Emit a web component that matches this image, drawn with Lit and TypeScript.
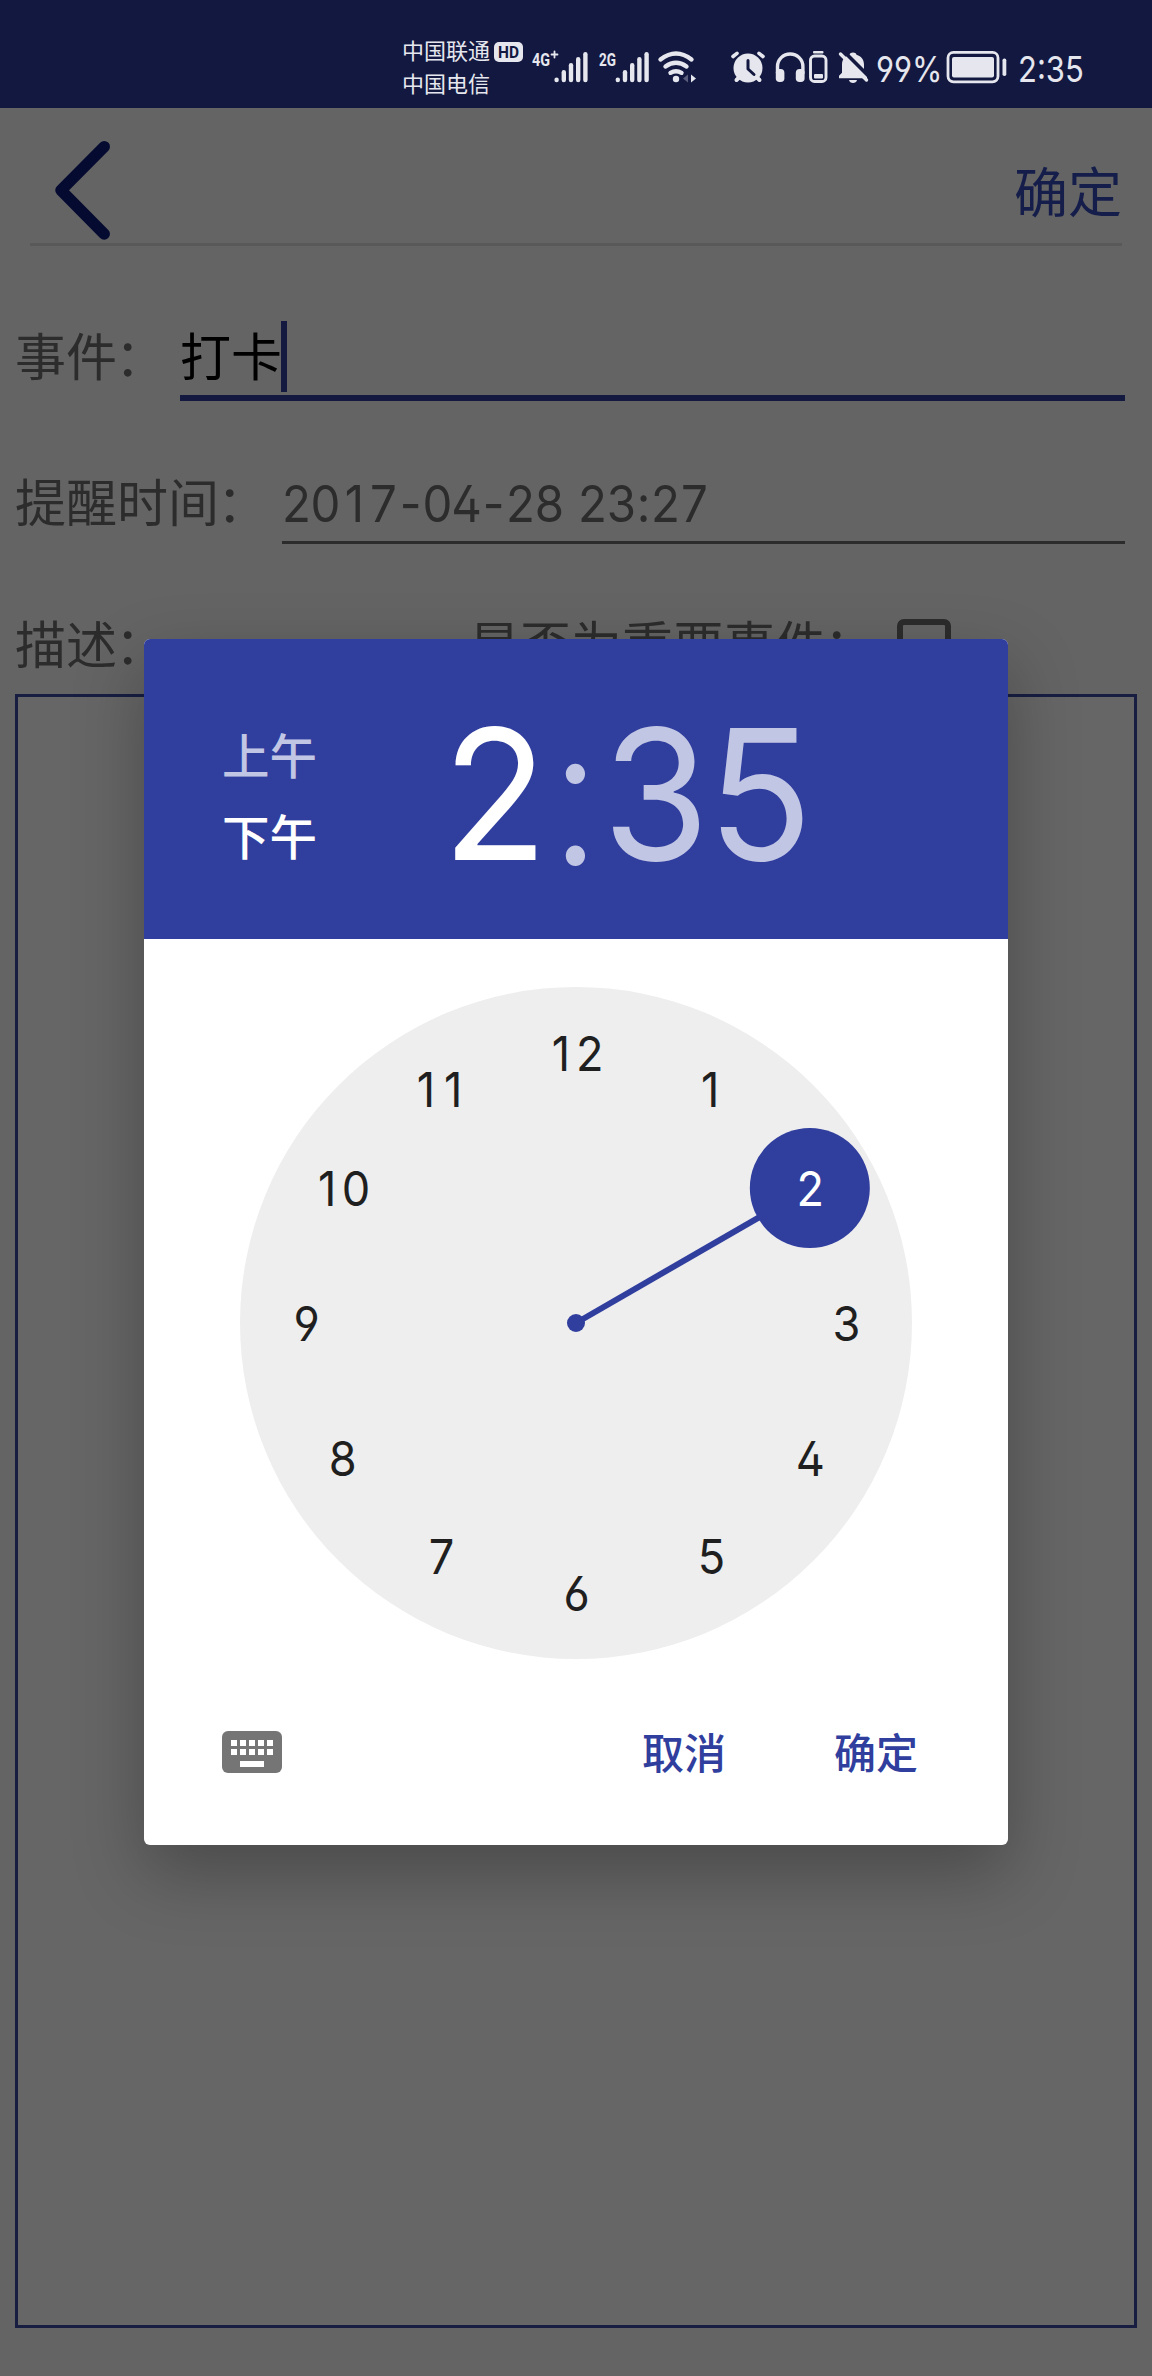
import { LitElement, html, svg, css } from "lit";
import { customElement, property } from "lit/decorators.js";

@customElement("status-bar")
class StatusBar extends LitElement {
  static styles = css`
    :host { display: block; }
    .bar {
      display: flex; height: 108px; box-sizing: border-box; padding-left: 402px;
      background: #131840; color: #e6e7ee;
      font-family: "Noto Sans CJK SC", sans-serif; white-space: nowrap;
    }
    .carriers { width: 88px; padding-top: 33px; font-size: 22px; line-height: 33px; }
    .icons { display: block; flex: none; width: 385px; height: 108px; }
    .icon-text { font-family: Roboto, sans-serif; font-weight: 700; }
    .num {
      font-family: Inter, sans-serif; font-feature-settings: "cv02", "cv03", "cv04";
      font-size: 36px; line-height: 40px; padding-top: 49px;
    }
    .num span { display: inline-block; transform-origin: 0 50%; transform: scaleX(0.86); }
    .pct { width: 69px; padding-left: 1px; }
    .battery { display: block; width: 62px; height: 108px; flex: none; }
    .time { padding-left: 11px; }
  `;

  private bars(x: number) {
    const tops = [77.5, 70, 63, 57, 52];
    return tops.map((t, i) => svg`<rect x=${x + i * 7.2} y=${t} width="4.4" height=${82.3 - t} rx="2.2" fill="#e6e7ee"/>`);
  }

  render() {
    return html`<div class="bar">
      <div class="carriers"><div>中国联通</div><div>中国电信</div></div>
      <svg class="icons" viewBox="490 0 385 108" fill="none" stroke-linecap="round" stroke-linejoin="round">
        <rect x="494" y="42" width="29" height="20" rx="5" fill="#e6e7ee"/>
        <text class="icon-text" x="508.5" y="58" font-size="17" text-anchor="middle" fill="#131840" textLength="21" lengthAdjust="spacingAndGlyphs">HD</text>
        <text class="icon-text" x="532" y="66" font-size="19" fill="#e6e7ee" textLength="18" lengthAdjust="spacingAndGlyphs">4G</text>
        <path d="M551.5 54.5h6M554.5 51.5v6" stroke="#e6e7ee" stroke-width="1.8"/>
        ${this.bars(554.4)}
        <text class="icon-text" x="599" y="66" font-size="19" fill="#e6e7ee" textLength="17" lengthAdjust="spacingAndGlyphs">2G</text>
        ${this.bars(615.6)}
        <path d="M660.5 59.5Q676 47.500 691.500 59.500" stroke="#e6e7ee" stroke-width="4.400"/>
        <path d="M665.500 66.500Q676 59 686.500 66.500" stroke="#e6e7ee" stroke-width="4.400"/>
        <path d="M670.500 72.800Q676 69.500 681.500 72.800" stroke="#e6e7ee" stroke-width="4.400"/>
        <circle cx="676" cy="79" r="3.200" fill="#e6e7ee"/>
        <path d="M688 74.500v8l-5-4z" fill="#5b5e7d"/>
        <path d="M691 74.500v8l5-4z" fill="#e6e7ee"/>
        <circle cx="748" cy="68" r="14.500" fill="#e6e7ee"/>
        <path d="M733 56.500l4-3.200M763 56.500l-4-3.200" stroke="#e6e7ee" stroke-width="3.600"/>
        <path d="M736.500 80l3-3M759.500 80l-3-3" stroke="#e6e7ee" stroke-width="4"/>
        <path d="M748 60.500v8.500l6 5.500" stroke="#131840" stroke-width="3"/>
        <path d="M777.500 73v-6.500a12.700 12.500 0 0 1 25.400 0V73" stroke="#e6e7ee" stroke-width="3.400"/>
        <rect x="775.800" y="69" width="8.600" height="13" rx="3.800" fill="#e6e7ee"/>
        <rect x="795.800" y="69" width="8.800" height="13" rx="3.800" fill="#e6e7ee"/>
        <rect x="810.500" y="56" width="15.500" height="25.500" rx="4" stroke="#e6e7ee" stroke-width="2.900"/>
        <rect x="813" y="51" width="10.500" height="2.600" rx="1" fill="#e6e7ee"/>
        <rect x="814" y="74" width="9" height="4.500" rx="1" fill="#e6e7ee"/>
        <path d="M839 78.300v-2.500l3-3v-8c0-5.500 3-8.500 7.500-10 .5-3 6.500-3 7 0 5 1.500 7.500 5 7.500 10v8l3 3v2.500z" fill="#e6e7ee"/>
        <path d="M849 80h8c-.5 4-7.500 4-8 0z" fill="#e6e7ee"/>
        <path d="M843 50.500l29 29" stroke="#131840" stroke-width="3.600"/>
        <path d="M840.500 54l26 26" stroke="#e6e7ee" stroke-width="3.400"/>
      </svg>
      <div class="num pct"><span>99%</span></div>
      <svg class="battery" viewBox="945 0 62 108" fill="none">
        <rect x="948" y="52.300" width="50" height="29.500" rx="5.500" stroke="#e6e7ee" stroke-width="2.800"/>
        <rect x="952" y="57" width="42" height="20.500" rx="2" fill="#e6e7ee"/>
        <rect x="1002.500" y="58.500" width="3.800" height="17.500" rx="1.800" fill="#e6e7ee"/>
      </svg>
      <div class="num time"><span>2:35</span></div>
    </div>`;
  }
}

@customElement("event-form")
class EventForm extends LitElement {
  @property() date = "2017-04-28 23:27";

  static styles = css`
    :host { display: block; }
    .form { font-family: "Noto Sans CJK SC", sans-serif; font-size: 51px; color: #2c2c2c; white-space: nowrap; }
    .top { display: flex; justify-content: space-between; align-items: center; height: 135px; margin: 0 30px; border-bottom: 3px solid #595959; }
    .back { display: block; width: 90px; height: 135px; }
    .ok { font-size: 54px; line-height: 80px; color: #151d4a; padding-top: 28px; }
    .row { display: flex; align-items: flex-end; padding: 0 27px 0 15px; box-sizing: border-box; }
    .r1 { height: 155px; }
    .r2 { height: 143px; }
    .r3 { height: 150px; padding-bottom: 11px; }
    .label { line-height: 81px; }
    .mark { margin: 0 -3px 0 -2px; }
    .r1 .label { width: 165px; margin-bottom: 6px; }
    .r2 .label { width: 267px; margin-bottom: 3px; }
    .r3 .first { width: 454px; }
    .field { flex: 1; display: flex; align-items: center; }
    .active { color: #000; height: 81px; line-height: 81px; border-bottom: 6px solid #141a3f; }
    .caret { width: 6px; height: 71px; margin: 3px 0 0 -1px; background: #141a3f; }
    .date { height: 74px; line-height: 74px; border-bottom: 3px solid #2c2c2c; }
    .ch {
      width: 29px; display: flex; justify-content: center; white-space: pre;
      font-family: Inter, sans-serif; font-size: 51px; font-feature-settings: "cv02", "cv03", "cv04";
      transform: scaleX(0.93);
    }
    .dash { width: 25.2px; }
    .gap { width: 13.7px; }
    .colon { width: 15px; }
    .check { width: 42px; height: 42px; border: 6px solid #2c2c2c; border-radius: 7px; margin: 0 0 10px 25px; }
    .desc { margin: 0 15px; height: 1628px; border: 3px solid #171e42; background: #666; }
  `;
  render() {
    const mark = html`<span class="mark">：</span>`;
    const kinds: Record<string, string> = { "-": "ch dash", " ": "ch gap", ":": "ch colon" };
    return html`<div class="form">
      <div class="top">
        <svg class="back" viewBox="30 108 90 135"><path d="M104.200 146.700L61 190.300L104.200 234" fill="none" stroke="#050a30" stroke-width="11.500" stroke-linecap="round" stroke-linejoin="round"/></svg>
        <div class="ok">确定</div>
      </div>
      <div class="row r1"><div class="label">事件${mark}</div><div class="field active">打卡<span class="caret"></span></div></div>
      <div class="row r2"><div class="label">提醒时间${mark}</div><div class="field date">${[...this.date].map((c) => html`<span class=${kinds[c] ?? "ch"}>${c}</span>`)}</div></div>
      <div class="row r3"><div class="label first">描述${mark}</div><div class="label">是否为重要事件${mark}</div><div class="check"></div></div>
      <div class="desc"></div>
    </div>`;
  }
}

@customElement("time-dialog")
class TimeDialog extends LitElement {
  @property({ type: Number }) hour = 2;

  static styles = css`
    :host { display: block; }
    .dialog {
      width: 864px; height: 1206px; border-radius: 6px; overflow: hidden; background: #fff;
      box-shadow: 0 28px 70px rgba(0, 0, 0, 0.28);
      font-family: "Noto Sans CJK SC", sans-serif; white-space: nowrap;
    }
    .head { display: flex; height: 300px; box-sizing: border-box; padding: 74px 0 0 78px; background: #303e9e; color: #c1c6e4; }
    .ampm { width: 221px; font-size: 47.5px; line-height: 81px; font-weight: 500; }
    .on { color: #fff; }
    .big {
      display: flex; height: 162px; line-height: 162px; font-family: Inter, sans-serif; font-size: 182px;
      font-feature-settings: "cv02", "cv03", "cv04";
    }
    .d, .c { display: flex; justify-content: center; }
    .d { width: 104px; transform: scaleX(0.95); }
    .c { width: 57px; font-weight: 300; transform: scale(1, 1.07); }
    .clock { display: block; width: 672px; height: 672px; margin: 48px auto 0; }
    .n { font-family: Inter, sans-serif; font-size: 48px; font-feature-settings: "cv02", "cv03", "cv04"; text-anchor: middle; fill: #1f1f1f; }
    .sel { fill: #fff; }
    .foot { display: flex; align-items: center; height: 186px; padding-left: 78px; font-size: 42px; font-weight: 500; color: #303e9e; }
    .kb { display: block; flex: none; width: 60px; height: 42px; }
    .btn { line-height: 60px; padding-bottom: 2px; }
    .cancel { margin-left: 360px; width: 192px; flex: none; }
  `;

  /** Horizontal centre of each digit, relative to the number's spot on the dial. */
  private digitXs(n: number) {
    if (n === 1) return "-1.5";
    if (n === 11) return "-16.5 12.5";
    return n > 9 ? "-16.6 14.1" : "0";
  }

  render() {
    const nums = Array.from({ length: 12 }, (_, i) => i + 1);
    const pos = (n: number) => {
      const a = (n * Math.PI) / 6;
      return [336 + 270 * Math.sin(a), 336 - 270 * Math.cos(a)];
    };
    const [hx, hy] = pos(this.hour);
    return html`<div class="dialog">
      <div class="head">
        <div class="ampm"><div>上午</div><div class="on">下午</div></div>
        <div class="big"><span class="d on">2</span><span class="c">:</span><span class="d">3</span><span class="d">5</span></div>
      </div>
      <svg class="clock" viewBox="0 0 672 672">
        <circle cx="336" cy="336" r="336" fill="#eee"/>
        <line x1="336" y1="336" x2=${hx} y2=${hy} stroke="#303e9e" stroke-width="6"/>
        <circle cx="336" cy="336" r="9" fill="#303e9e"/>
        <circle cx=${hx} cy=${hy} r="60" fill="#303e9e"/>
        ${nums.map((n) => {
          const [x, y] = pos(n);
          return svg`<text class=${n === this.hour ? "n sel" : "n"} x=${this.digitXs(n)} transform=${`translate(${x + 0.5} ${y + 17.5}) scale(0.94 1)`}>${n}</text>`;
        })}
      </svg>
      <div class="foot">
        <svg class="kb" viewBox="0 0 60 42">
          <rect width="60" height="42" rx="6" fill="#757575"/>
          ${[9, 18, 27, 36, 45].map((x) => svg`<rect x=${x} y="9" width="6" height="6" fill="#fff"/><rect x=${x} y="18" width="6" height="6" fill="#fff"/>`)}
          <rect x="18" y="30" width="24" height="6" fill="#fff"/>
        </svg>
        <div class="btn cancel">取消</div><div class="btn">确定</div>
      </div>
    </div>`;
  }
}

@customElement("app-root")
class AppRoot extends LitElement {
  static styles = css`
    :host { display: block; }
    .screen { position: relative; width: 1152px; height: 2376px; overflow: hidden; background: #646464; }
    .modal { position: absolute; left: 144px; top: 639px; }
  `;
  render() {
    return html`<div class="screen">
      <status-bar></status-bar>
      <event-form></event-form>
      <time-dialog class="modal"></time-dialog>
    </div>`;
  }
}
